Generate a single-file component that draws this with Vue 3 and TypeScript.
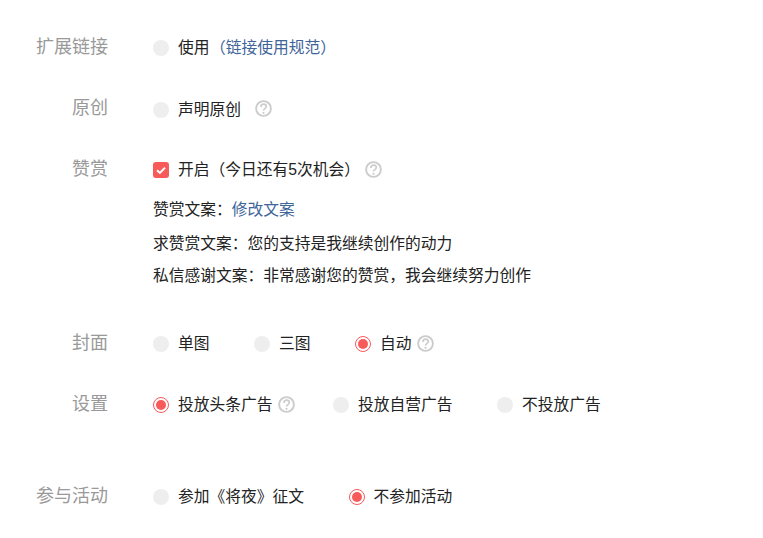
<script setup lang="ts">
interface Option {
  text: string
  checked?: boolean
  help?: boolean
}

const coverOptions: Option[] = [
  { text: '单图' },
  { text: '三图' },
  { text: '自动', checked: true, help: true },
]

const adOptions: Option[] = [
  { text: '投放头条广告', checked: true, help: true },
  { text: '投放自营广告' },
  { text: '不投放广告' },
]

const activityOptions: Option[] = [
  { text: '参加《将夜》征文' },
  { text: '不参加活动', checked: true },
]
</script>

<template>
  <div class="form">
    <div class="row row-link">
      <div class="label">扩展链接</div>
      <div class="field">
        <label class="radio">
          <span class="dot"></span>
          <span>使用</span>
          <a class="link link-paren">（链接使用规范）</a>
        </label>
      </div>
    </div>

    <div class="row row-original">
      <div class="label">原创</div>
      <div class="field field-low">
        <label class="radio">
          <span class="dot"></span>
          <span>声明原创</span>
        </label>
        <svg class="help help-far" viewBox="0 0 17 17">
          <circle cx="8.5" cy="8.5" r="7.4" fill="none" stroke="#ccc" stroke-width="1.9" />
          <path d="M5.9 6.9c0-1.7 1.2-2.8 2.7-2.8s2.7 1 2.7 2.4c0 2.1-2.8 2-2.8 4" fill="none" stroke="#ccc" stroke-width="1.6" />
          <circle cx="8.5" cy="12.8" r="1.1" fill="#ccc" />
        </svg>
      </div>
    </div>

    <div class="row row-reward">
      <div class="label">赞赏</div>
      <div class="field-column">
        <div class="field">
          <label class="radio">
            <svg class="check" viewBox="0 0 16 16">
              <rect width="16" height="16" rx="3" fill="#f85959" />
              <path d="M4 8.2l2.9 2.7L12 5.6" fill="none" stroke="#fff" stroke-width="2" />
            </svg>
            <span>开启（今日还有5次机会）</span>
          </label>
          <svg class="help help-near" viewBox="0 0 17 17">
            <circle cx="8.5" cy="8.5" r="7.4" fill="none" stroke="#ccc" stroke-width="1.9" />
            <path d="M5.9 6.9c0-1.7 1.2-2.8 2.7-2.8s2.7 1 2.7 2.4c0 2.1-2.8 2-2.8 4" fill="none" stroke="#ccc" stroke-width="1.6" />
            <circle cx="8.5" cy="12.8" r="1.1" fill="#ccc" />
          </svg>
        </div>
        <p class="line line-edit">赞赏文案：<a class="link">修改文案</a></p>
        <p class="line line-ask">求赞赏文案：您的支持是我继续创作的动力</p>
        <p class="line line-thanks">私信感谢文案：非常感谢您的赞赏，我会继续努力创作</p>
      </div>
    </div>

    <div class="row row-cover">
      <div class="label">封面</div>
      <div class="field options">
        <div v-for="item in coverOptions" :key="item.text" class="option">
          <label class="radio">
            <span class="dot" :class="{ on: item.checked }"></span>
            <span>{{ item.text }}</span>
          </label>
          <svg v-if="item.help" class="help" viewBox="0 0 17 17">
            <circle cx="8.5" cy="8.5" r="7.4" fill="none" stroke="#ccc" stroke-width="1.9" />
            <path d="M5.9 6.9c0-1.7 1.2-2.8 2.7-2.8s2.7 1 2.7 2.4c0 2.1-2.8 2-2.8 4" fill="none" stroke="#ccc" stroke-width="1.6" />
            <circle cx="8.5" cy="12.8" r="1.1" fill="#ccc" />
          </svg>
        </div>
      </div>
    </div>

    <div class="row row-ad">
      <div class="label">设置</div>
      <div class="field options">
        <div v-for="item in adOptions" :key="item.text" class="option">
          <label class="radio">
            <span class="dot" :class="{ on: item.checked }"></span>
            <span>{{ item.text }}</span>
          </label>
          <svg v-if="item.help" class="help" viewBox="0 0 17 17">
            <circle cx="8.5" cy="8.5" r="7.4" fill="none" stroke="#ccc" stroke-width="1.9" />
            <path d="M5.9 6.9c0-1.7 1.2-2.8 2.7-2.8s2.7 1 2.7 2.4c0 2.1-2.8 2-2.8 4" fill="none" stroke="#ccc" stroke-width="1.6" />
            <circle cx="8.5" cy="12.8" r="1.1" fill="#ccc" />
          </svg>
        </div>
      </div>
    </div>

    <div class="row row-activity">
      <div class="label">参与活动</div>
      <div class="field options">
        <div v-for="item in activityOptions" :key="item.text" class="option">
          <label class="radio">
            <span class="dot" :class="{ on: item.checked }"></span>
            <span>{{ item.text }}</span>
          </label>
        </div>
      </div>
    </div>
  </div>
</template>

<style>
html,
body {
  margin: 0;
  background: #fff;
}
</style>

<style scoped>
.form {
  width: 763px;
  height: 538px;
  padding-top: 36px;
  box-sizing: border-box;
  overflow: hidden;
  font-family: "Liberation Sans", "Noto Sans CJK SC", sans-serif;
  font-size: 15.75px;
  color: #222;
}

.row {
  display: flex;
  align-items: flex-start;
}

.row-link,
.row-cover {
  margin-bottom: 37px;
}

.row-original {
  margin-bottom: 36px;
}

.row-reward {
  margin-bottom: 44px;
}

.row-ad {
  margin-bottom: 68px;
}

.label {
  width: 108px;
  margin-right: 45px;
  flex: none;
  text-align: right;
  font-size: 18px;
  line-height: 23px;
  color: #999;
}

.field {
  display: flex;
  align-items: center;
  height: 24px;
}

.field-low {
  margin-top: 1px;
}

.field-column {
  display: flex;
  flex-direction: column;
}

.options {
  gap: 44.5px;
}

.option {
  display: flex;
  align-items: center;
  gap: 5px;
}

.row-ad .option:first-child {
  margin-right: -6px;
}

.radio {
  display: flex;
  align-items: center;
  gap: 9px;
  line-height: 24px;
}

.dot {
  position: relative;
  width: 16px;
  height: 16px;
  border-radius: 50%;
  background: #eee;
  flex: none;
  box-sizing: border-box;
}

.dot.on {
  background: #fff;
  border: 1px solid #f85959;
}

.dot.on::after {
  content: "";
  position: absolute;
  inset: 2px;
  border-radius: 50%;
  background: #f85959;
}

.check {
  width: 16px;
  height: 16px;
  flex: none;
}

.link {
  color: #406599;
  text-decoration: none;
}

.link-paren {
  margin-left: -8.5px;
}

.help {
  width: 17px;
  height: 17px;
  flex: none;
  margin-top: -2px;
}

.help-far {
  margin-left: 14px;
  margin-top: -3px;
}

.help-near {
  margin-left: 5px;
}

.line {
  margin: 0;
  line-height: 24px;
}

.line-edit {
  margin-top: 16px;
}

.line-ask {
  margin-top: 10px;
}

.line-thanks {
  margin-top: 8px;
}
</style>
